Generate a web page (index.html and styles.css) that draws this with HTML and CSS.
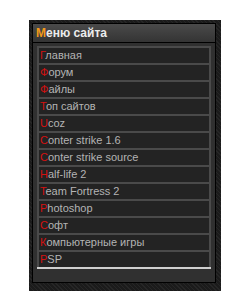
FILE: index.html
```html
<!DOCTYPE html>
<html lang="ru">
<head>
  <meta charset="UTF-8">
  <title>Меню сайта</title>
  <link rel="stylesheet" href="styles.css">
</head>
<body>
  <div class="block">
    <div class="panel">
      <div class="panel-title"><span>М</span>еню сайта</div>
      <div class="panel-body">
        <ul class="menu">
          <li><a href="#"><span>Г</span>лавная</a></li>
          <li><a href="#"><span>Ф</span>орум</a></li>
          <li><a href="#"><span>Ф</span>айлы</a></li>
          <li><a href="#"><span>Т</span>оп сайтов</a></li>
          <li><a href="#"><span>U</span>coz</a></li>
          <li><a href="#"><span>C</span>onter strike 1.6</a></li>
          <li><a href="#"><span>C</span>onter strike source</a></li>
          <li><a href="#"><span>H</span>alf-life 2</a></li>
          <li><a href="#"><span>T</span>eam Fortress 2</a></li>
          <li><a href="#"><span>P</span>hotoshop</a></li>
          <li><a href="#"><span>С</span>офт</a></li>
          <li><a href="#"><span>К</span>омпьютерные игры</a></li>
          <li><a href="#"><span>P</span>SP</a></li>
        </ul>
      </div>
    </div>
  </div>
</body>
</html>
```

FILE: styles.css
```css
body {
  margin: 0;
  background: #fff;
  font-family: "Liberation Sans", Arial, sans-serif;
}
.block {
  margin: 20px 0 0 29px;
  width: 184px;
  height: 263px;
  padding: 3px 5px 5px 3px;
  background-color: #1e1e1e;
  background-image: repeating-linear-gradient(45deg, #262626 0 1px, #1b1b1b 1px 3px);
}
.panel {
  border: 1px solid #000;
  background: #303030;
  height: 258px;
}
.panel-title {
  height: 18px;
  line-height: 18px;
  padding-left: 3px;
  background: linear-gradient(#4a4a4a, #343434);
  border-bottom: 1px solid #000;
  color: #ececec;
  font-size: 12px;
  font-weight: bold;
}
.panel-title span {
  color: #f29a1a;
}
.panel-body {
  padding: 3px 4px 0 4px;
}
.menu {
  list-style: none;
  margin: 0;
  padding: 0;
  border: 2px solid #4a4a4a;
  border-bottom: 0;
  box-shadow: 0 2px 0 #cfcfcf;
}
.menu li {
  border-bottom: 2px solid #4a4a4a;
  background: #232323;
}
.menu li:last-child {
  border-bottom: 0;
}
.menu a {
  display: block;
  height: 15px;
  line-height: 15px;
  padding-left: 1px;
  color: #b4b4b4;
  font-size: 11px;
  text-decoration: none;
}
.menu a span {
  color: #d41212;
}
```
